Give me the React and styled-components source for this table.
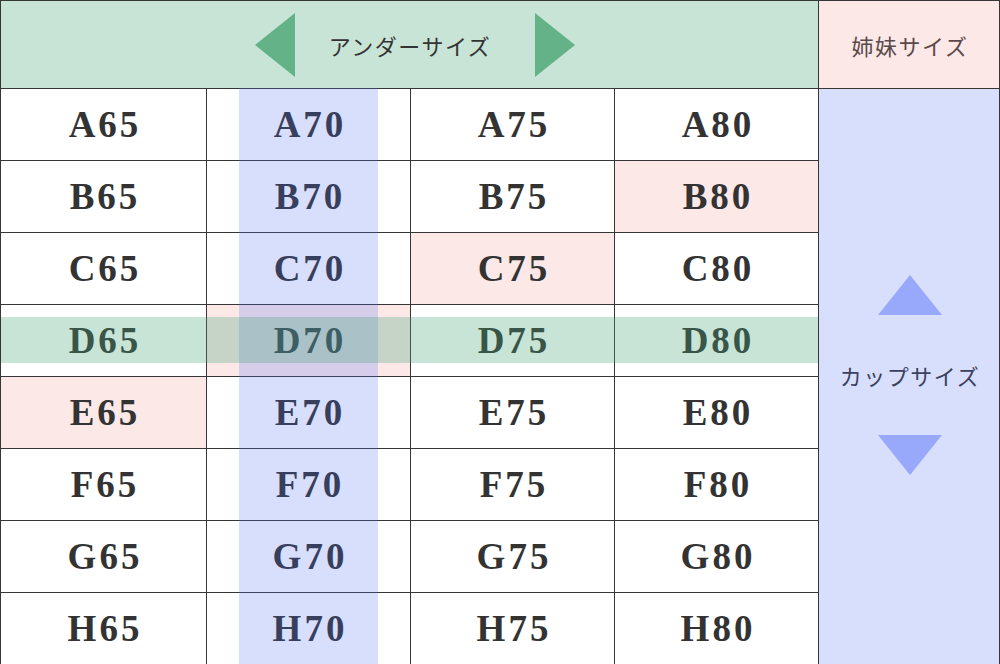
import React from "react";
import styled, { createGlobalStyle } from "styled-components";

const GlobalStyle = createGlobalStyle`
  html, body { margin: 0; padding: 0; background: #ffffff; }
  * { box-sizing: border-box; }
`;

const Table = styled.div`
  position: relative;
  width: 1000px;
  height: 664px;
  display: grid;
  grid-template-columns: 205px 203px 203px 203px 180px;
  grid-template-rows: 87px repeat(8, 71px);
  gap: 1px;
  padding: 1px;
  background: #363636;
  overflow: hidden;
`;

const UnderHeader = styled.div`
  grid-column: 1 / 5;
  background: #c8e4d6;
  display: flex;
  align-items: center;
  justify-content: center;
  gap: 34px;
  padding-left: 11px;
`;

const HeaderLabel = styled.span`
  font-family: "Noto Sans CJK JP", "Noto Sans", sans-serif;
  font-size: 22px;
  letter-spacing: 1.5px;
  color: ${(p) => p.$color || "#333333"};
  margin-right: ${(p) => p.$trail || 0}px;
`;

const SisterHeader = styled.div`
  background: #fde8e8;
  display: flex;
  align-items: center;
  justify-content: center;
  padding-left: 2px;
`;

const Cell = styled.div`
  background: ${(p) => (p.$pink ? "#fde8e8" : "#ffffff")};
  display: flex;
  align-items: center;
  justify-content: center;
  font-family: "Liberation Serif", "Times New Roman", serif;
  font-weight: 700;
  font-size: 37px;
  letter-spacing: 3px;
  color: #333333;
  padding-left: 3px;
`;

const CupColumn = styled.div`
  grid-column: 5;
  grid-row: 2 / 10;
  background: #d8dffc;
  display: flex;
  flex-direction: column;
  align-items: center;
  justify-content: center;
  gap: 44px;
  padding-bottom: 4px;
  padding-left: 2px;
`;

const Arrow = styled.svg`
  display: block;
  flex: none;
`;

const ColumnStripe = styled.div`
  position: absolute;
  left: 239px;
  width: 139px;
  top: 88px;
  bottom: 0;
  background: rgba(78, 108, 242, 0.22);
  pointer-events: none;
`;

const RowBand = styled.div`
  position: absolute;
  left: 1px;
  width: 817px;
  top: 317px;
  height: 46px;
  background: rgba(70, 165, 118, 0.3);
  pointer-events: none;
`;

const cups = ["A", "B", "C", "D", "E", "F", "G", "H"];
const unders = [65, 70, 75, 80];
const sisters = new Set(["B80", "C75", "D70", "E65"]);

export default function App() {
  return (
    <>
      <GlobalStyle />
      <Table>
        <UnderHeader>
          <Arrow width="40" height="64" viewBox="0 0 40 64">
            <polygon points="40,0 40,64 0,32" fill="#64b287" />
          </Arrow>
          <HeaderLabel $trail={10}>アンダーサイズ</HeaderLabel>
          <Arrow width="40" height="64" viewBox="0 0 40 64">
            <polygon points="0,0 40,32 0,64" fill="#64b287" />
          </Arrow>
        </UnderHeader>
        <SisterHeader>
          <HeaderLabel $color="#5a4a4a">姉妹サイズ</HeaderLabel>
        </SisterHeader>
        {cups.map((c, ri) =>
          unders.map((u, ci) => {
            const label = `${c}${u}`;
            return (
              <Cell
                key={label}
                $pink={sisters.has(label)}
                style={{ gridRow: ri + 2, gridColumn: ci + 1 }}
              >
                {label}
              </Cell>
            );
          })
        )}
        <CupColumn>
          <Arrow width="64" height="40" viewBox="0 0 64 40">
            <polygon points="32,0 64,40 0,40" fill="#98a9fc" />
          </Arrow>
          <HeaderLabel $color="#3b4260">カップサイズ</HeaderLabel>
          <Arrow width="64" height="40" viewBox="0 0 64 40">
            <polygon points="0,0 64,0 32,40" fill="#98a9fc" />
          </Arrow>
        </CupColumn>
        <ColumnStripe />
        <RowBand />
      </Table>
    </>
  );
}
